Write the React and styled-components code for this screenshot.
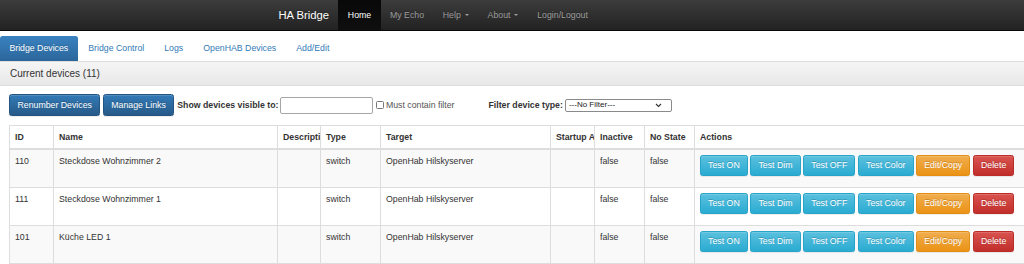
import React from 'react';
import styled, { createGlobalStyle } from 'styled-components';

const GlobalStyle = createGlobalStyle`
  html, body {
    margin: 0;
    padding: 0;
    overflow: hidden;
    background: #fff;
  }
  body {
    font-family: "Liberation Sans", Arial, Helvetica, sans-serif;
    font-size: 8.75px;
    line-height: 12.5px;
    color: #333;
  }
  * { box-sizing: border-box; }
`;

const devices = [
  { id: '110', name: 'Steckdose Wohnzimmer 2' },
  { id: '111', name: 'Steckdose Wohnzimmer 1' },
  { id: '101', name: 'Küche LED 1' },
];

const columns = [
  { title: 'ID', width: 44 },
  { title: 'Name', width: 224 },
  { title: 'Description', width: 43 },
  { title: 'Type', width: 60 },
  { title: 'Target', width: 170 },
  { title: 'Startup Actions', width: 44 },
  { title: 'Inactive', width: 50 },
  { title: 'No State', width: 50 },
  { title: 'Actions', width: 345 },
];

const actions = [
  { label: 'Test ON', kind: 'info' },
  { label: 'Test Dim', kind: 'info' },
  { label: 'Test OFF', kind: 'info' },
  { label: 'Test Color', kind: 'info' },
  { label: 'Edit/Copy', kind: 'warning' },
  { label: 'Delete', kind: 'danger' },
];

const btnColors = {
  primary: { from: '#337ab7', to: '#265a88', border: '#245580' },
  info: { from: '#5bc0de', to: '#2aabd2', border: '#28a4c9' },
  warning: { from: '#f0ad4e', to: '#eb9316', border: '#e38d13' },
  danger: { from: '#d9534f', to: '#c12e2a', border: '#b92c28' },
};

const App = () => {
  return (
    <>
      <GlobalStyle />
      <Navbar>
        <Brand>HA Bridge</Brand>
        <NavItem $active>Home</NavItem>
        <NavItem>My Echo</NavItem>
        <NavItem>Help <Caret /></NavItem>
        <NavItem>About <Caret /></NavItem>
        <NavItem>Login/Logout</NavItem>
      </Navbar>

      <Tabs>
        <Tab $active>Bridge Devices</Tab>
        <Tab>Bridge Control</Tab>
        <Tab>Logs</Tab>
        <Tab>OpenHAB Devices</Tab>
        <Tab>Add/Edit</Tab>
      </Tabs>

      <Panel>
        <PanelHeading>Current devices (11)</PanelHeading>
        <PanelBody>
          <Toolbar>
            <Button $kind="primary">Renumber Devices</Button>
            <Button $kind="primary">Manage Links</Button>
            <Label>Show devices visible to:</Label>
            <TextInput type="text" />
            <CheckBox />
            <CheckText>Must contain filter</CheckText>
            <Label $gap>Filter device type:</Label>
            <Select>
              <span>---No Filter---</span>
              <svg width="7" height="5" viewBox="0 0 7 5">
                <path d="M1 1 L3.5 3.5 L6 1" fill="none" stroke="#333" strokeWidth="1.1" />
              </svg>
            </Select>
          </Toolbar>

          <Table>
            <colgroup>
              {columns.map((c) => (
                <col key={c.title} style={{ width: c.width }} />
              ))}
            </colgroup>
            <thead>
              <tr>
                {columns.map((c) => (
                  <Th key={c.title}>{c.title}</Th>
                ))}
              </tr>
            </thead>
            <tbody>
              {devices.map((d, i) => (
                <Row key={d.id} $striped={i % 2 === 0}>
                  <Td>{d.id}</Td>
                  <Td>{d.name}</Td>
                  <Td></Td>
                  <Td>switch</Td>
                  <Td>OpenHab Hilskyserver</Td>
                  <Td></Td>
                  <Td>false</Td>
                  <Td>false</Td>
                  <ActionCell>
                    {actions.map((a) => (
                      <ActionButton key={a.label} $kind={a.kind}>{a.label}</ActionButton>
                    ))}
                  </ActionCell>
                </Row>
              ))}
            </tbody>
          </Table>
        </PanelBody>
      </Panel>
    </>
  );
};

const Navbar = styled.nav`
  height: 31px;
  display: flex;
  align-items: stretch;
  padding-left: 269px;
  background-image: linear-gradient(to bottom, #3c3c3c 0%, #222 100%);
  border-bottom: 1px solid #080808;
`;

const Brand = styled.a`
  display: flex;
  align-items: center;
  padding: 0 9.4px;
  font-size: 11.25px;
  color: #fff;
  text-shadow: 0 -1px 0 rgba(0, 0, 0, 0.25);
`;

const NavItem = styled.a`
  display: flex;
  align-items: center;
  gap: 3px;
  padding: 0 9.4px;
  color: ${(p) => (p.$active ? '#fff' : '#9d9d9d')};
  background-image: ${(p) =>
    p.$active ? 'linear-gradient(to bottom, #080808 0%, #0f0f0f 100%)' : 'none'};
  text-shadow: 0 -1px 0 rgba(0, 0, 0, 0.25);
`;

const Caret = styled.span`
  display: inline-block;
  width: 0;
  height: 0;
  margin-left: 1px;
  border-top: 2.5px solid currentColor;
  border-left: 2.5px solid transparent;
  border-right: 2.5px solid transparent;
`;

const Tabs = styled.ul`
  display: flex;
  margin: 0;
  padding: 5px 0 0;
  list-style: none;
`;

const Tab = styled.li`
  height: 25px;
  display: flex;
  align-items: center;
  padding: 0 9.4px;
  margin-right: 1.25px;
  border-radius: 2.5px 2.5px 0 0;
  color: ${(p) => (p.$active ? '#fff' : '#337ab7')};
  background-image: ${(p) =>
    p.$active ? 'linear-gradient(to bottom, #3a82c1 0%, #2b669a 100%)' : 'none'};
  text-shadow: ${(p) => (p.$active ? '0 -1px 0 rgba(0,0,0,0.15)' : 'none')};
`;

const Panel = styled.div`
  border-top: 1px solid #ddd;
`;

const PanelHeading = styled.div`
  height: 24px;
  display: flex;
  align-items: center;
  padding: 1px 10px 0;
  font-size: 10px;
  color: #333;
  background-image: linear-gradient(to bottom, #f5f5f5 0%, #e8e8e8 100%);
  border-bottom: 1px solid #ddd;
`;

const PanelBody = styled.div`
  padding: 8px 0 0 9px;
`;

const Toolbar = styled.div`
  display: flex;
  align-items: center;
  height: 22px;
`;

const Button = styled.button`
  height: 22px;
  padding: 0 7.5px;
  margin-right: 2.4px;
  font-family: inherit;
  font-size: 8.75px;
  line-height: 12.5px;
  color: #fff;
  border: 1px solid ${(p) => btnColors[p.$kind].border};
  border-radius: 2.5px;
  background-image: linear-gradient(
    to bottom,
    ${(p) => btnColors[p.$kind].from} 0%,
    ${(p) => btnColors[p.$kind].to} 100%
  );
  text-shadow: 0 -1px 0 rgba(0, 0, 0, 0.2);
  box-shadow: inset 0 1px 0 rgba(255, 255, 255, 0.15), 0 1px 1px rgba(0, 0, 0, 0.075);
  white-space: nowrap;
`;

const ActionButton = styled(Button)`
  height: 21px;
  padding: 0 7.1px;
  margin-right: 2.6px;
`;

const Label = styled.label`
  font-weight: bold;
  margin-left: ${(p) => (p.$gap ? '34px' : '0.6px')};
  margin-right: 2px;
  white-space: nowrap;
`;

const TextInput = styled.input`
  width: 93px;
  height: 17px;
  margin: 0 2.5px 0 0;
  padding: 0 2px;
  border: 1px solid #a6a6a6;
  border-radius: 2px;
  font-family: inherit;
  font-size: 8.75px;
`;

const CheckBox = styled.span`
  width: 8px;
  height: 8px;
  margin-right: 2px;
  border: 1px solid #777;
  border-radius: 1.5px;
  background: #fff;
`;

const CheckText = styled.span`
  color: #555;
`;

const Select = styled.div`
  width: 107px;
  height: 13px;
  display: flex;
  align-items: center;
  justify-content: space-between;
  padding: 0 9px 0 3px;
  border: 1px solid #8a8a8a;
  border-radius: 2px;
  font-size: 8px;
  color: #222;
  background: #fff;
`;

const Table = styled.table`
  margin-top: 9px;
  table-layout: fixed;
  width: 1030px;
  border-collapse: collapse;
  border: 1px solid #ddd;
`;

const Th = styled.th`
  height: 23px;
  padding: 0 5px;
  text-align: left;
  font-weight: bold;
  white-space: nowrap;
  overflow: hidden;
  text-overflow: clip;
  border: 1px solid #ddd;
  border-bottom: 2px solid #ddd;
  vertical-align: middle;
`;

const Row = styled.tr`
  background: ${(p) => (p.$striped ? '#f9f9f9' : '#fff')};
`;

const Td = styled.td`
  padding: 5px;
  vertical-align: top;
  border: 1px solid #ddd;
  white-space: nowrap;
  overflow: hidden;
`;

const ActionCell = styled(Td)`
  padding: 5px 5px 11px;
`;

export default App;
